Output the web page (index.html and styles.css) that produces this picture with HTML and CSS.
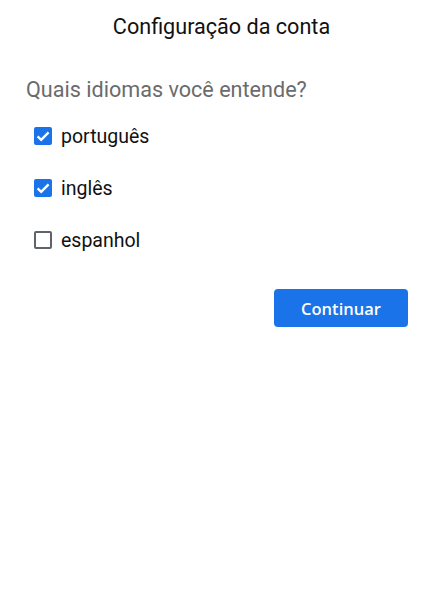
FILE: index.html
```html
<!DOCTYPE html>
<html lang="pt">
<head>
    <meta charset="UTF-8">
    <meta name="viewport" content="width=device-width, initial-scale=1.0">
    <title>Configuração da conta</title>
    <link rel="stylesheet" href="styles.css">
</head>
<body>
    <div class="screen">
        <h1 class="title">Configuração da conta</h1>
        <p class="question">Quais idiomas você entende?</p>
        <div class="options">
            <label class="option">
                <span class="box checked">
                    <svg viewBox="0 0 18 18" width="18" height="18"><path d="M3.6 9.4l3.6 3.5L14.6 5.4" fill="none" stroke="#fff" stroke-width="2.4"/></svg>
                </span>
                <span class="option-label">português</span>
            </label>
            <label class="option">
                <span class="box checked">
                    <svg viewBox="0 0 18 18" width="18" height="18"><path d="M3.6 9.4l3.6 3.5L14.6 5.4" fill="none" stroke="#fff" stroke-width="2.4"/></svg>
                </span>
                <span class="option-label">inglês</span>
            </label>
            <label class="option">
                <span class="box"></span>
                <span class="option-label">espanhol</span>
            </label>
        </div>
        <div class="actions">
            <button type="button" class="btn-continue">Continuar</button>
        </div>
    </div>
</body>
</html>
```

FILE: styles.css
```css
body {
    margin: 0;
    background: #fff;
    font-family: Roboto, "Noto Sans", Arial, sans-serif;
    color: #202124;
}
.screen {
    padding: 13px 0 0;
}
.title {
    margin: 0;
    text-align: center;
    font-size: 21.6px;
    font-weight: 400;
    line-height: 28px;
    color: #111;
}
.question {
    margin: 35px 0 0 26px;
    font-size: 21.6px;
    line-height: 28px;
    color: #6b6b6b;
}
.options {
    margin: 20px 0 0 34px;
    display: flex;
    flex-direction: column;
    gap: 28px;
}
.option {
    display: flex;
    align-items: center;
    gap: 9px;
    height: 24px;
}
.box {
    width: 18px;
    height: 18px;
    box-sizing: border-box;
    border: 2px solid #5f6368;
    border-radius: 2px;
    display: flex;
}
.box.checked {
    background: #1a73e8;
    border: none;
}
.option-label {
    font-size: 19.5px;
    color: #111;
}
.actions {
    display: flex;
    justify-content: flex-end;
    margin: 37px 35px 0 0;
}
.btn-continue {
    width: 134px;
    height: 38px;
    background: #1a73e8;
    color: #fff;
    border: none;
    border-radius: 4px;
    font-family: "Open Sans", Roboto, sans-serif;
    font-weight: 600;
    font-size: 16.5px;
    cursor: pointer;
}
```
